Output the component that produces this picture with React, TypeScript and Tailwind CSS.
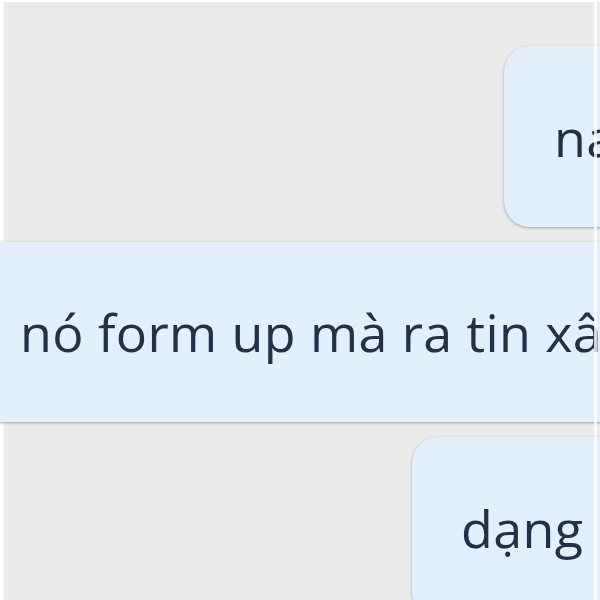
export default function App() {
  return (
    <div className="relative h-[600px] w-[600px] overflow-hidden bg-[#ebebec] font-['Open_Sans','Noto_Sans',sans-serif] text-[#243047] [font-variant-ligatures:none]">
      <div className="h-[600px] border-t-2 border-l-[3px] border-white">
        <div className="h-full border-l border-[#f6f6f7] pt-[44px]">
          <div className="flex flex-col gap-[15px]">
            <div className="ml-[500px] flex h-[181px] w-[300px] items-center whitespace-nowrap rounded-[26px] bg-[#e4effd] pl-[50px] text-[52px] tracking-[0.4px] shadow-[0_1px_3px_rgba(60,70,90,0.45)]">
              na
            </div>
            <div className="-ml-[40px] flex h-[180px] w-[760px] items-center whitespace-nowrap rounded-[26px] bg-[#e4effd] pl-[56px] text-[52px] tracking-[0.4px] shadow-[0_1px_3px_rgba(60,70,90,0.45)]">
              nó form up mà ra tin xâ
            </div>
            <div className="ml-[408px] flex h-[181px] w-[300px] items-center whitespace-nowrap rounded-[26px] bg-[#e4effd] pl-[49px] text-[52px] tracking-[0.4px] shadow-[0_1px_3px_rgba(60,70,90,0.45)]">
              dạng
            </div>
          </div>
        </div>
      </div>
      <div className="absolute top-0 left-[594px] h-full w-[3px] bg-white/80" />
    </div>
  );
}
